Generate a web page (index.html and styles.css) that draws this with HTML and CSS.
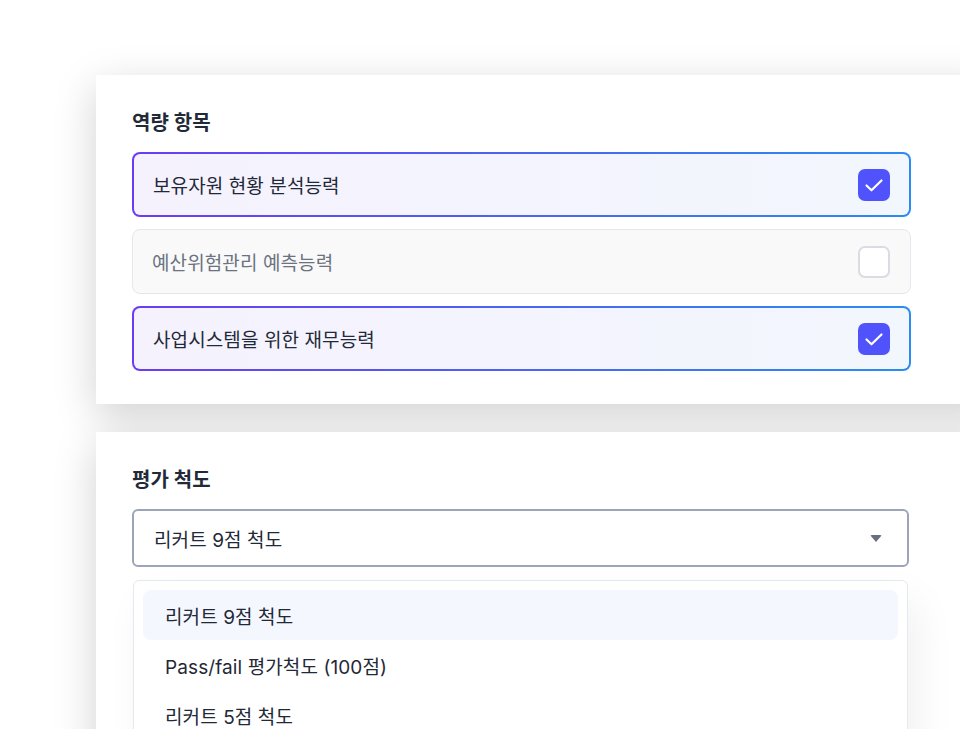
FILE: index.html
```html
<!DOCTYPE html>
<html lang="ko">
<head>
    <meta charset="UTF-8">
    <meta name="viewport" content="width=device-width, initial-scale=1.0">
    <title>역량 평가</title>
    <link rel="stylesheet" href="styles.css">
</head>
<body>
<div class="stage">

    <div class="card">
        <h2 class="card-title">역량 항목</h2>
        <div class="items">
            <label class="item checked">
                <span>보유자원 현황 분석능력</span>
                <span class="box">
                    <svg width="20" height="20" viewBox="0 0 20 20"><path d="M2.5 10.5l5 4.8 10-9.8" fill="none" stroke="#fff" stroke-width="2.2" stroke-linecap="round" stroke-linejoin="round"/></svg>
                </span>
            </label>
            <label class="item">
                <span>예산위험관리 예측능력</span>
                <span class="box"></span>
            </label>
            <label class="item checked">
                <span>사업시스템을 위한 재무능력</span>
                <span class="box">
                    <svg width="20" height="20" viewBox="0 0 20 20"><path d="M2.5 10.5l5 4.8 10-9.8" fill="none" stroke="#fff" stroke-width="2.2" stroke-linecap="round" stroke-linejoin="round"/></svg>
                </span>
            </label>
        </div>
    </div>

    <div class="card card-scale">
        <h2 class="card-title">평가 척도</h2>
        <div class="select">
            <span>리커트 9점 척도</span>
            <span class="caret"></span>
        </div>
        <ul class="options">
            <li class="active">리커트 9점 척도</li>
            <li>Pass/fail 평가척도 (100점)</li>
            <li>리커트 5점 척도</li>
        </ul>
    </div>

</div>
</body>
</html>
```

FILE: styles.css
```css
html, body {
  margin: 0;
  height: 100%;
  overflow: hidden;
  background: #fff;
}

body {
  font-family: Inter, "Noto Sans CJK KR", sans-serif;
  color: #1f2937;
}

.stage {
  padding: 75px 0 0 96px;
}

.card {
  width: 900px;
  background: #fff;
  box-sizing: border-box;
  padding: 36px 0 33px 36px;
  box-shadow: 0 12px 40px rgba(0, 0, 0, 0.18);
  position: relative;
}

.card-scale {
  margin-top: 28px;
  padding-bottom: 40px;
}

.card-title {
  margin: 0 0 17px;
  font-size: 20px;
  line-height: 24px;
  font-weight: 600;
  color: #222a38;
}

.items {
  width: 779px;
  display: flex;
  flex-direction: column;
  gap: 12px;
}

.item {
  height: 65px;
  box-sizing: border-box;
  display: flex;
  align-items: center;
  justify-content: space-between;
  padding: 0 19px;
  border: 1px solid #e6e7ec;
  border-radius: 8px;
  background: #f9f9fa;
  color: #6b7280;
  font-size: 19px;
  letter-spacing: 0.1px;
}

.item.checked {
  border: 2px solid transparent;
  color: #1f2937;
  background:
    linear-gradient(90deg, #f5f2fe, #f2f6fd) padding-box,
    linear-gradient(90deg, #6b3cf2, #2a8cf3) border-box;
}

.box {
  width: 32px;
  height: 32px;
  box-sizing: border-box;
  border: 2px solid #dadce4;
  border-radius: 7px;
  background: #fff;
  display: flex;
  align-items: center;
  justify-content: center;
}

.item.checked .box {
  border: none;
  background: #5053fb;
}

.item:not(.checked) .box {
  margin-right: 1px;
}

.select {
  width: 777px;
  height: 58px;
  box-sizing: border-box;
  border: 2px solid #9ba5b7;
  border-radius: 6px;
  display: flex;
  align-items: center;
  justify-content: space-between;
  padding: 0 25px 0 20px;
  font-size: 19px;
  letter-spacing: 0.1px;
}

.caret {
  width: 0;
  height: 0;
  border-left: 6px solid transparent;
  border-right: 6px solid transparent;
  border-top: 7px solid #676f80;
  border-radius: 2px;
}

.options {
  list-style: none;
  margin: 13px 0 0 1px;
  width: 775px;
  box-sizing: border-box;
  padding: 9px;
  border: 1px solid #e6e8ef;
  border-radius: 6px;
  background: #fff;
  box-shadow: 10px 20px 40px rgba(0, 0, 0, 0.06);
}

.options li {
  height: 50px;
  display: flex;
  align-items: center;
  padding-left: 22px;
  border-radius: 8px;
  font-size: 19px;
  letter-spacing: 0.1px;
}

.options li.active {
  background: #f4f7fd;
}
```
